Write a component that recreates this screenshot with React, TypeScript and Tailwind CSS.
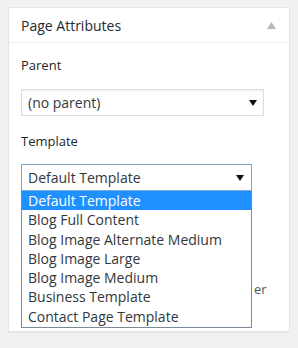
// Page Attributes metabox with the template dropdown opened.
const templates = [
  'Default Template',
  'Blog Full Content',
  'Blog Image Alternate Medium',
  'Blog Image Large',
  'Blog Image Medium',
  'Business Template',
  'Contact Page Template',
]

function Caret() {
  return (
    <svg width="8" height="6" viewBox="0 0 8 6" className="shrink-0">
      <path d="M0 0h8L4 6z" fill="#111" />
    </svg>
  )
}

export default function App() {
  return (
    <div
      className="h-[348px] w-[298px] bg-[#f1f1f1] px-[8px] pt-[7px] text-[#32373c]"
      style={{ fontFamily: '"Open Sans", "Noto Sans", sans-serif' }}
    >
      <div className="h-[325px] border border-[#e5e5e5] bg-white shadow-[0_1px_1px_rgba(0,0,0,0.04)]">
        <div className="flex h-[35px] items-center justify-between border-b border-[#eeeeee] pl-[12px] pr-[13px]">
          <h2 className="text-[14px] text-[#23282d]">Page Attributes</h2>
          <svg width="9" height="7" viewBox="0 0 9 7">
            <path d="M4.5 0L9 7H0z" fill="#b4b9be" />
          </svg>
        </div>
        <div className="px-[12px]">
          <p className="mt-[13px] text-[13px] leading-[18px] text-[#23282d]">Parent</p>
          <div className="mt-[15px] flex h-[27px] w-[243px] items-center justify-between border border-[#dddddd] pl-[6px] pr-[6px] text-[14px] shadow-[inset_0_1px_2px_rgba(0,0,0,0.07)]">
            <span>(no parent)</span>
            <Caret />
          </div>
          <p className="mt-[16px] text-[13px] leading-[18px] text-[#23282d]">Template</p>
          <div className="relative mt-[14px] w-[231px]">
            <div className="flex h-[27px] items-center justify-between border border-[#7fa6c9] pl-[6px] pr-[7px] text-[14px]">
              <span>Default Template</span>
              <Caret />
            </div>
            <ul className="border border-t-0 border-[#7a8a99] bg-white pb-[1px] text-[14px] leading-[19.3px]">
              {templates.map((t, i) => (
                <li
                  key={t}
                  className={i === 0 ? 'bg-[#1e90ff] pl-[6px] text-white' : 'pl-[6px] text-[#32373c]'}
                >
                  {t}
                </li>
              ))}
            </ul>
            <span className="absolute left-[233px] top-[116px] text-[13px] text-[#555]">er</span>
          </div>
        </div>
      </div>
    </div>
  )
}
